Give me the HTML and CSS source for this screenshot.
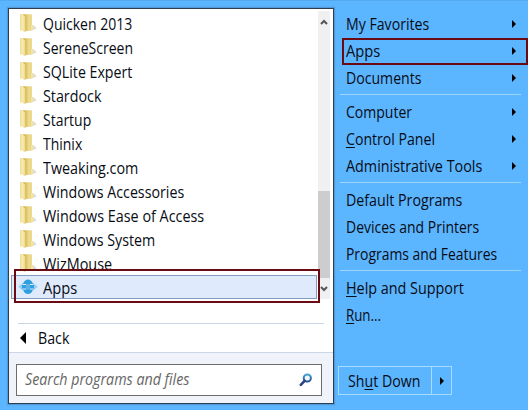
FILE: index.html
```html
<!DOCTYPE html>
<html lang="en">
<head>
<meta charset="utf-8">
<title>Start menu</title>
<link rel="stylesheet" href="styles.css">
</head>
<body>
<svg class="defs" width="0" height="0">
  <defs>
    <linearGradient id="front" x1="0" x2="1"><stop offset="0" stop-color="#ecdc93"/><stop offset=".5" stop-color="#f8ecb2"/><stop offset="1" stop-color="#ecd886"/></linearGradient>
    <linearGradient id="back" x1="0" x2="1"><stop offset="0" stop-color="#d2b85c"/><stop offset=".35" stop-color="#d8bf64"/><stop offset=".6" stop-color="#efdd8e"/><stop offset="1" stop-color="#dfca78"/></linearGradient>
    <linearGradient id="lens" x1="0" x2="0" y1="0" y2="1"><stop offset="0" stop-color="#45a4cf"/><stop offset="1" stop-color="#244a91"/></linearGradient>
    <symbol id="folder" viewBox="0 0 18 20">
      <path d="M11 18 L17.5 15.5 L15.5 13 L12 12Z" fill="#c9c9cb" opacity=".7"/>
      <path d="M3 1.2 L12.8 1.2 L12.8 12 L14.5 13 L13.5 17.2 L5 18.6Z" fill="url(#back)"/>
      <path d="M1 1 L3.5 1.2 L6.2 3.5 L6.2 19 L1 17Z" fill="url(#front)"/>
      <path d="M12 12.5 L14 12 L14.7 14 L13.5 17.2 L12 17.4Z" fill="#f3e5a2"/>
    </symbol>
    <symbol id="arrow" viewBox="0 0 4 8"><path d="M0 0 L4 4 L0 8Z"/></symbol>
  </defs>
</svg>
<main class="menu">
  <section class="programs">
    <div class="list-area">
      <ul class="list">
        <li><svg class="folder"><use href="#folder"/></svg><span data-w="89.2">Quicken 2013</span></li>
        <li><svg class="folder"><use href="#folder"/></svg><span data-w="90">SereneScreen</span></li>
        <li><svg class="folder"><use href="#folder"/></svg><span data-w="89.4">SQLite Expert</span></li>
        <li><svg class="folder"><use href="#folder"/></svg><span data-w="58.4">Stardock</span></li>
        <li><svg class="folder"><use href="#folder"/></svg><span data-w="48.2">Startup</span></li>
        <li><svg class="folder"><use href="#folder"/></svg><span data-w="39.2">Thinix</span></li>
        <li><svg class="folder"><use href="#folder"/></svg><span data-w="95.4">Tweaking.com</span></li>
        <li><svg class="folder"><use href="#folder"/></svg><span data-w="141.2">Windows Accessories</span></li>
        <li><svg class="folder"><use href="#folder"/></svg><span data-w="161.2">Windows Ease of Access</span></li>
        <li><svg class="folder"><use href="#folder"/></svg><span data-w="112.2">Windows System</span></li>
        <li><svg class="folder"><use href="#folder"/></svg><span data-w="69.2">WizMouse</span></li>
        <li class="selected">
          <svg class="app" viewBox="0 0 20 16">
            <g fill="#2f9fe0">
              <path d="M5 5 C6.5 -1 13.5 -1 15 5Z"/>
              <path d="M5 10.5 C6.5 16.5 13.5 16.5 15 10.5Z"/>
              <path d="M4 6 H8 V9.5 H4Z M12 6 H16 V9.5 H12Z"/>
              <path d="M8 4 H12 V12 H8Z" opacity=".75"/>
              <path d="M.3 7.8 L5 3.8 V11.7Z M19.7 7.8 L15 3.8 V11.7Z" opacity=".4"/>
            </g>
          </svg><span data-w="34.3">Apps</span>
        </li>
      </ul>
      <div class="scroll">
        <svg class="chev" viewBox="0 0 8 6"><path d="M1 5 L4 2 L7 5"/></svg>
        <div class="thumb"></div>
        <svg class="chev" viewBox="0 0 8 6"><path d="M1 1 L4 4 L7 1"/></svg>
      </div>
      <div class="mark mark-list"></div>
    </div>
    <div class="back"><svg viewBox="0 0 6 12"><path d="M6 0 V12 L0 6Z"/></svg><span data-w="31.4">Back</span></div>
    <div class="footer">
      <div class="search">
        <span data-w="164.4">Search programs and files</span>
        <svg viewBox="0 0 14 14"><circle cx="8.3" cy="5" r="3.6" fill="#eef7fd" stroke="url(#lens)" stroke-width="2"/><path d="M5.6 7.8 L1.8 11.8" stroke="#2b4385" stroke-width="2.6" stroke-linecap="round"/></svg>
      </div>
    </div>
  </section>
  <nav class="places">
    <div class="item"><span data-w="83.2">My Favorites</span><svg><use href="#arrow"/></svg></div>
    <div class="item marked"><span data-w="34.3">Apps</span><svg><use href="#arrow"/></svg><div class="mark mark-apps"></div></div>
    <div class="item"><span data-w="75.5">Documents</span><svg><use href="#arrow"/></svg></div>
    <hr>
    <div class="item"><span data-w="66">Computer</span><svg><use href="#arrow"/></svg></div>
    <div class="item"><span data-w="89"><u>C</u>ontrol Panel</span><svg><use href="#arrow"/></svg></div>
    <div class="item"><span data-w="136.3">Administrative Tools</span><svg><use href="#arrow"/></svg></div>
    <hr>
    <div class="item"><span data-w="116.3">Default Programs</span></div>
    <div class="item"><span data-w="133.2">Devices and Printers</span></div>
    <div class="item"><span data-w="151.2">Programs and Features</span></div>
    <hr>
    <div class="item"><span data-w="118"><u>H</u>elp and Support</span></div>
    <div class="item"><span data-w="35"><u>R</u>un...</span></div>
    <div class="power"><span data-w="72.4">Sh<u>u</u>t Down</span><div class="more"><svg><use href="#arrow"/></svg></div></div>
  </nav>
</main>
<script src="fit.js"></script>
</body>
</html>
```
FILE: styles.css
```css
* { box-sizing: border-box; }
body {
  margin: 0;
  width: 528px;
  height: 410px;
  overflow: hidden;
  background: #5cb5ff;
  color: #080c14;
  font: 15.5px/24px "Open Sans", "Noto Sans", sans-serif;
}
.defs { position: absolute; }
svg { display: block; flex: none; }
span { display: block; white-space: nowrap; transform-origin: 0 50%; }
.menu {
  display: flex;
  height: 410px;
  padding: 7px 0 6px 8px;
  border-top: 1px solid #55a9ee;
}
.programs {
  display: flex;
  flex-direction: column;
  width: 326px;
  height: 396px;
  background: #fff;
  border: 1px solid #2d3e50;
  box-shadow: 0 0 1px 1px rgba(75, 135, 190, .6);
}
.list-area {
  position: relative;
  display: flex;
  justify-content: space-between;
  height: 290px;
  padding: 2px 3px 0 2px;
}
.list { margin: 0; padding: 0; width: 306px; list-style: none; }
.list li {
  display: flex;
  align-items: center;
  height: 24px;
  padding-left: 7px;
  border: 1px solid transparent;
}
.list span { margin-top: 1px; }
.list .selected { background: #dfebfc; border-color: #819dc0; }
.folder { width: 18px; height: 20px; margin-right: 6px; }
.app { width: 20px; height: 16px; margin: 0 5px 0 -1px; }
.scroll {
  display: flex;
  flex-direction: column;
  align-items: center;
  width: 12px;
  height: 288px;
  background: #f0f0f0;
}
.scroll .chev { width: 8px; height: 6px; fill: none; stroke: #555; stroke-width: 2; margin-top: 8px; }
.thumb { width: 12px; height: 87px; margin-top: 166px; background: #cdcdcd; }
.mark { position: absolute; border: 2px solid #6b0a12; }
.mark-list { left: 5px; top: 260px; width: 306px; height: 34px; }
.back {
  display: flex;
  align-items: center;
  gap: 12px;
  height: 29px;
  margin: 24px 9px 0;
  padding-left: 2px;
  border-top: 1px solid #c5d9ea;
}
.back svg { width: 6px; height: 12px; }
.footer {
  flex: 1;
  padding: 11px 11px 7px 7px;
  background: #f0f3fa;
  border-top: 1px solid #cbd6e8;
}
.search {
  display: flex;
  align-items: center;
  justify-content: space-between;
  height: 32px;
  padding: 0 8px;
  border: 1px solid #6d6d6d;
  background: #fff;
  color: #666;
  font-style: italic;
}
.search span { margin-top: -2px; }
.search svg { width: 14px; height: 14px; }
.places { width: 194px; padding: 2px 7px 0 6px; }
.item {
  display: flex;
  align-items: center;
  justify-content: space-between;
  height: 27px;
  padding: 0 5px 0 6px;
}
.item svg, .more svg { width: 4px; height: 8px; }
.marked { position: relative; }
.mark-apps { left: 2px; top: 1px; width: 186px; height: 27px; }
hr { height: 1px; margin: 3px 0; border: 0; background: #9ed6fb; }
u { text-decoration: underline; text-underline-offset: 2px; text-decoration-thickness: 1px; }
.power {
  display: flex;
  align-items: center;
  justify-content: space-between;
  width: 114px;
  height: 29px;
  margin: 38px 0 0 -2px;
  padding-left: 9px;
  border: 1px solid #a5dcff;
}
.more { display: flex; flex: none; width: 20px; height: 27px; align-items: center; justify-content: center; border-left: 1px solid #a5dcff; }
```
FILE: fit.js
```js
document.querySelectorAll("[data-w]").forEach(function (label) {
  var ratio = parseFloat(label.dataset.w) / label.getBoundingClientRect().width;
  label.style.transform = "scaleX(" + ratio.toFixed(4) + ")";
});
```
